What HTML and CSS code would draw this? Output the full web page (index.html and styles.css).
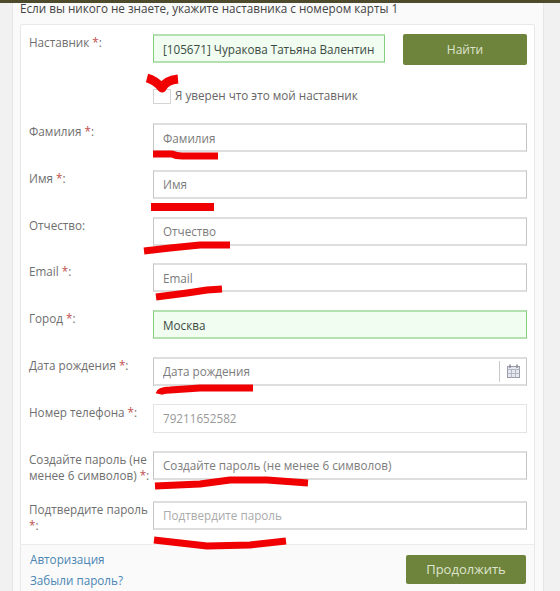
FILE: index.html
```html
<!DOCTYPE html>
<html lang="ru">
<head>
  <meta charset="UTF-8" />
  <meta name="viewport" content="width=device-width, initial-scale=1.0" />
  <title>Регистрация</title>
  <link rel="stylesheet" href="styles.css">
</head>
<body>
  <div class="topbar"></div>
  <div class="content">
    <p class="note">Если вы никого не знаете, укажите наставника с номером карты 1</p>
    <form class="card">
      <div class="card-body">
        <div class="row row-mentor">
          <label class="lbl">Наставник <span class="req">*</span>:</label>
          <input class="field field-ok field-mentor" type="text" value="[105671] Чуракова Татьяна Валентин" />
          <button class="btn btn-find" type="button">Найти</button>
        </div>
        <div class="row-check">
          <span class="check"></span>
          <span class="check-text">Я уверен что это мой наставник</span>
        </div>
        <div class="row">
          <label class="lbl">Фамилия <span class="req">*</span>:</label>
          <input class="field" type="text" placeholder="Фамилия" />
        </div>
        <div class="row">
          <label class="lbl">Имя <span class="req">*</span>:</label>
          <input class="field" type="text" placeholder="Имя" />
        </div>
        <div class="row">
          <label class="lbl">Отчество:</label>
          <input class="field" type="text" placeholder="Отчество" />
        </div>
        <div class="row">
          <label class="lbl">Email <span class="req">*</span>:</label>
          <input class="field" type="text" placeholder="Email" />
        </div>
        <div class="row">
          <label class="lbl">Город <span class="req">*</span>:</label>
          <input class="field field-ok" type="text" value="Москва" />
        </div>
        <div class="row">
          <label class="lbl">Дата рождения <span class="req">*</span>:</label>
          <div class="date-group">
            <input class="field field-date" type="text" placeholder="Дата рождения" />
            <span class="date-icon">
              <svg width="13" height="14" viewBox="0 0 13 14">
                <rect x="0.5" y="2.5" width="12" height="11" fill="#e6e8f0" stroke="#9a9aa8" />
                <path d="M0.5 5.5h12M4.5 5.5v8M8.5 5.5v8M0.5 9.5h12" stroke="#b4b6c4" fill="none" />
                <path d="M3 0.5v3.5M10 0.5v3.5" stroke="#8a8a96" stroke-width="1.5" fill="none" />
              </svg>
            </span>
          </div>
        </div>
        <div class="row">
          <label class="lbl">Номер телефона <span class="req">*</span>:</label>
          <input class="field field-off" type="text" value="79211652582" />
        </div>
        <div class="row">
          <label class="lbl">Создайте пароль (не менее 6 символов) <span class="req">*</span>:</label>
          <input class="field" type="text" placeholder="Создайте пароль (не менее 6 символов)" />
        </div>
        <div class="row row-last">
          <label class="lbl">Подтвердите пароль <span class="req">*</span>:</label>
          <input class="field field-light" type="text" placeholder="Подтвердите пароль" />
        </div>
      </div>
      <div class="card-footer">
        <div class="links">
          <a href="#">Авторизация</a>
          <a href="#">Забыли пароль?</a>
        </div>
        <button class="btn btn-next" type="button">Продолжить</button>
      </div>
    </form>
  </div>

  <!-- red marker scribbles drawn over the form -->
  <svg class="scribbles" width="560" height="591" viewBox="0 0 560 591">
    <g fill="none" stroke="#f00000" stroke-linecap="butt" stroke-linejoin="round">
      <path stroke-width="9" d="M147 78 Q155 80 162 88 Q166 80 178 79" />
      <path stroke-width="7" d="M153 154 L172 154 Q176 156 182 156 L218 156" />
      <path stroke-width="8" d="M151 207 L214 207" />
      <path stroke-width="7" d="M144 251 L170 248 L200 245 L230 245" />
      <path stroke-width="7" d="M156 297 L187 293 L207 290 L222 289" />
      <path stroke-width="7" d="M159 394 Q160 390 170 390 L200 388 L253 388" />
      <path stroke-width="7" d="M155 486 L200 484 L230 480 L267 480 L308 483" />
      <path stroke-width="7" d="M154 540 L207 546 L250 545 L286 541" />
    </g>
  </svg>
</body>
</html>
```

FILE: styles.css
```css
* {
  box-sizing: border-box;
}
body {
  margin: 0;
  height: 591px;
  overflow: hidden;
  position: relative;
  font-family: 'Open Sans', sans-serif;
  font-size: 11.7px;
  color: #6f6f6f;
  background-color: #f1f1f1;
}
.topbar {
  height: 3px;
  background: #4d4b2c;
}
.content {
  margin: 0 16px 0 12px;
  padding: 0 8px 0 7px;
  height: 588px;
  background: #fafafa;
  border-left: 1px solid #e6e6e6;
  border-right: 1px solid #e6e6e6;
}
.note {
  margin: 0;
  height: 21px;
  line-height: 11px;
  color: #444;
}
.card {
  background: #fff;
  border: 1px solid #e8e8e8;
  border-radius: 2px;
}
.card-body {
  padding: 9px 7px 14px 8px;
}
.row {
  display: flex;
  align-items: flex-start;
  height: 29px;
  margin-bottom: 17.8px;
}
.row-mentor {
  margin-bottom: 0;
}
.row-last {
  margin-bottom: 0;
  margin-top: 21.4px;
}
.lbl {
  flex: 0 0 124px;
  line-height: 16px;
}
.req {
  color: #c0504d;
}
.field {
  flex: 1;
  min-width: 0;
  height: 29px;
  padding: 0 9px;
  font-family: inherit;
  font-size: 11.7px;
  color: #666;
  background: #fff;
  border: 2px solid #dedede;
  border-left-width: 1px;
  border-right: 1px solid #c4c4c4;
  border-left-color: #c4c4c4;
  outline: none;
}
.field::placeholder {
  color: #7c7c7c;
  opacity: 1;
}
.field-light::placeholder {
  color: #aaa;
}
.field-off {
  color: #999;
  border: 1px solid #e4e4e4;
}
.field-ok {
  color: #3d4a44;
  background: #f0fdf0;
  border: 2px solid #b5e0b0;
  border-left-width: 1px;
  border-right: 1px solid #84cc7e;
  border-left-color: #84cc7e;
}
.field-mentor {
  flex: 0 0 232px;
  padding-right: 0;
}
.btn {
  border: none;
  border-radius: 2px;
  background: #6e833c;
  color: #dfe5cf;
  font-family: inherit;
  font-size: 12px;
}
.btn-find {
  width: 124px;
  height: 31px;
  margin-left: 18px;
}
.row-check {
  display: flex;
  align-items: center;
  height: 18px;
  margin: 23px 0 19px 124px;
}
.check {
  width: 18px;
  height: 15px;
  margin-top: 3px;
  border: 1px solid #d4d4d4;
  background: #fff;
}
.check-text {
  margin-left: 4px;
  color: #666;
}
.date-group {
  flex: 1;
  display: flex;
  position: relative;
  height: 29px;
}
.field-date {
  padding-right: 40px;
}
.date-icon {
  position: absolute;
  top: 4px;
  right: 1px;
  bottom: 4px;
  width: 27px;
  display: flex;
  align-items: center;
  justify-content: center;
  border-left: 1px solid #c8c8c8;
}
.card-footer {
  display: flex;
  justify-content: space-between;
  align-items: flex-start;
  height: 48px;
  padding: 6px 8px 0 9px;
  background: #fafafa;
  border-top: 1px solid #ececec;
}
.links {
  display: flex;
  flex-direction: column;
  gap: 4px;
  line-height: 17px;
}
.links a {
  color: #4b86b4;
  text-decoration: none;
}
.btn-next {
  width: 120px;
  height: 29px;
  margin-top: 4px;
  font-size: 13px;
}
.scribbles {
  position: absolute;
  top: 0;
  left: 0;
  pointer-events: none;
}
```
